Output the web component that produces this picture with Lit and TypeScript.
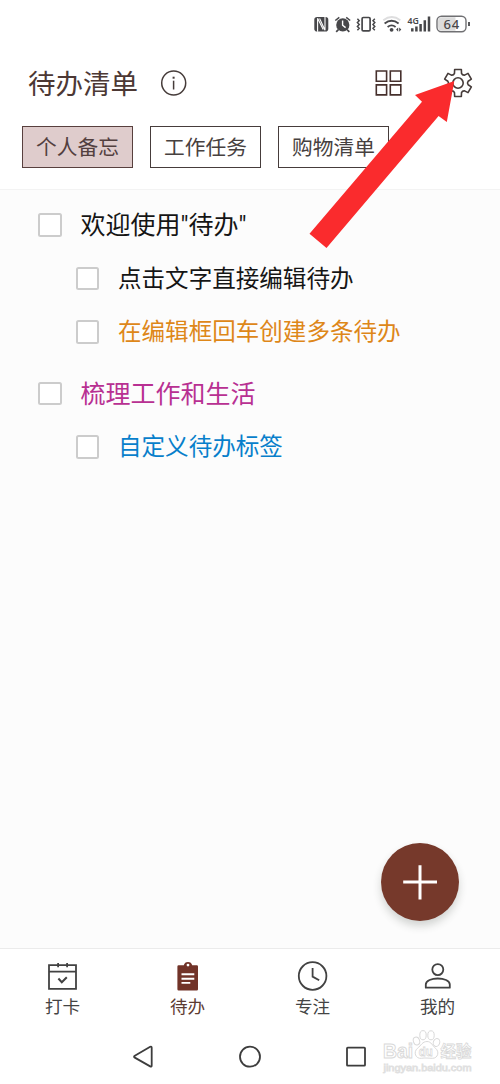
import { LitElement, html, svg, css } from "lit";
import { customElement, property, state } from "lit/decorators.js";
import { classMap } from "lit/directives/class-map.js";

const FONT = css`"Noto Sans CJK SC", "Noto Sans", sans-serif`;

function gearPath(cx: number, cy: number): string {
  const pts: string[] = [];
  for (let i = 0; i < 6; i++) {
    const base = i * 60 - 90;
    const at = (deg: number, r: number) => {
      const a = ((base + deg) * Math.PI) / 180;
      return `${(cx + r * Math.cos(a)).toFixed(2)} ${(cy + r * Math.sin(a)).toFixed(2)}`;
    };
    pts.push(`${i ? "L" : "M"}${at(-20, 10.3)}`, `L${at(-14, 13.9)}`, `L${at(14, 13.9)}`, `L${at(20, 10.3)}`);
    pts.push(`Q${at(30, 8.8)} ${at(40, 10.3)}`);
  }
  return pts.join(" ") + "Z";
}

@customElement("status-bar")
class StatusBar extends LitElement {
  static styles = css`
    :host { display: block; height: 48px; }
    svg { display: block; }
    text { font-family: "Noto Sans", sans-serif; font-weight: 500; fill: #47474a; }
  `;
  render() {
    return html`<svg width="500" height="48" viewBox="0 0 500 48" fill="none" stroke="#47474a">
      <rect x="314.3" y="17" width="14" height="14.6" rx="2.8" fill="#47474a" stroke="none"/>
      <path d="M317.6 31.8V18.2l5.6 11.2M319.6 18.4l5.4 11.8V16.8" stroke="#fff" stroke-width="1.1"/>
      <circle cx="342.8" cy="24.9" r="6.6" fill="#47474a" stroke="none"/>
      <path d="M335.3 20.5l4-3.2M350.2 20.5l-4-3.2" stroke-width="1.5"/>
      <path d="M338.5 29.5l-2.3 2.4M347 29.5l2.3 2.4" stroke-width="1.8"/>
      <path d="M342.6 20.6v4.6l3 2.4" stroke="#fff" stroke-width="1.4"/>
      <rect x="362.1" y="17.5" width="8" height="13.4" rx="1.2" stroke-width="1.7"/>
      <path d="M357.4 18.8l1.8 1.9-1.8 1.9 1.8 1.9-1.8 1.9 1.8 1.9-1.8 1.9M374.8 18.8l-1.8 1.9 1.8 1.9-1.8 1.9 1.8 1.9-1.8 1.9 1.8 1.9" stroke-width="1.5"/>
      <path d="M383.3 20.2q8.5-6.4 17 0" stroke="#dededf" stroke-width="1.9"/>
      <path d="M384.6 23.4q7-5.2 14 0M387.6 26.9q4-3 8 0" stroke-width="1.9"/>
      <circle cx="391.6" cy="29.8" r="1.9" fill="#47474a" stroke="none"/>
      <path d="M398.2 27.4l-2.1 2.2 2.1 2.2zM399.2 27.4l2.1 2.2-2.1 2.2z" fill="#47474a" stroke="none"/>
      <text x="407.5" y="23.6" font-size="9.3" stroke="none" textLength="11.3" lengthAdjust="spacingAndGlyphs" style="font-weight:600">4G</text>
      <path d="M412.3 31.6v-3.4M416.4 31.6v-5M420.6 31.6v-7.6M424.8 31.6v-11.3M429 31.6V16.6" stroke-width="2.5"/>
      <rect x="437" y="16.2" width="29" height="15.6" rx="4.5" fill="#fff" stroke-width="1.4" stroke="#707073"/>
      <path d="M442 17.2h13.5v13.6h-13.5q-4 0-4-4v-5.6q0-4 4-4z" fill="#dcdcdc" stroke="none"/>
      <path d="M469 22v4" stroke-width="1.8"/>
      <text x="443.5" y="28.8" font-size="13" stroke="none" textLength="15.6">64</text>
    </svg>`;
  }
}

@customElement("list-header")
class ListHeader extends LitElement {
  @state() private selected = 0;
  private tabs = ["个人备忘", "工作任务", "购物清单"];
  static styles = css`
    :host { display: block; box-sizing: border-box; height: 142px; padding: 14px 22px 0; background: #fff; border-bottom: 1px solid #f3f3f3; }
    .bar { display: flex; align-items: center; height: 42px; padding: 0 4px 0 6px; }
    .title { font: 400 27.5px/40px ${FONT}; color: #4c3834; margin: 0 21.5px 2px 0; white-space: nowrap; }
    .spacer { flex: 1; }
    .grid { margin-right: 39px; }
    svg { display: block; flex: none; }
    .tabs { display: flex; gap: 17px; margin-top: 22px; }
    .tab { box-sizing: border-box; width: 111px; height: 41.5px; border: 1.5px solid #463c3b; background: #fff; color: #474140; font: 400 20.7px/38px ${FONT}; text-align: center; white-space: nowrap; }
    .tab.on { background: #dfcccc; border-color: #58403e; color: #53403f; }
  `;
  render() {
    return html`
      <div class="bar">
        <h1 class="title">待办清单</h1>
        <svg width="28" height="28" viewBox="0 0 28 28" fill="none" stroke="#463c3a" stroke-width="1.5">
          <circle cx="13.7" cy="14" r="12"/><path d="M13.6 11.7v8.8"/><path d="M13.6 7.7v2" stroke-width="2"/>
        </svg>
        <div class="spacer"></div>
        <svg class="grid" width="28" height="28" viewBox="0 0 28 28" fill="none" stroke="#46302d" stroke-width="1.6">
          <path d="M1.3 2h10.3v10.3H1.3zM15.3 2h10.5v10.3H15.3zM1.3 15.9h10.3v10H1.3zM15.3 15.9h10.5v10H15.3z"/>
        </svg>
        <svg width="32" height="32" viewBox="0 0 32 32" fill="none" stroke="#463c3a" stroke-width="1.6" stroke-linejoin="round">
          <path d=${gearPath(16, 16)}/><circle cx="16" cy="16" r="5.2"/>
        </svg>
      </div>
      <div class="tabs">
        ${this.tabs.map((t, i) => html`<div class=${classMap({ tab: true, on: i === this.selected })} @click=${() => (this.selected = i)}>${t}</div>`)}
      </div>`;
  }
}

@customElement("todo-item")
class TodoItem extends LitElement {
  @property({ type: Boolean, reflect: true }) child = false;
  @property({ reflect: true }) tone = "ink";
  static styles = css`
    :host { display: flex; align-items: center; height: 53px; padding-left: 38px; color: #151515; font: 400 25px/40px Roboto, ${FONT}; white-space: nowrap; }
    :host([child]) { height: 53.5px; padding-left: 75.5px; font-size: 23.55px; }
    :host([tone="orange"]) { color: #de8719; }
    :host([tone="magenta"]) { color: #b83092; }
    :host([tone="blue"]) { color: #087fcb; }
    .box { box-sizing: border-box; flex: none; width: 23.5px; height: 23.5px; border: 2px solid #ccc; border-radius: 2.5px; background: #fff; margin-right: 19px; }
    .text { padding-top: 2px; }
    :host([child]) .text { padding-top: 1px; }
  `;
  render() {
    return html`<span class="box"></span><span class="text"><slot></slot></span>`;
  }
}

@customElement("tab-nav")
class TabNav extends LitElement {
  static styles = css`
    :host { display: grid; grid-template-columns: repeat(4, 1fr); box-sizing: border-box; height: 78px; padding-top: 11px; background: #fff; border-top: 1px solid #ebebeb; }
    .item { display: flex; flex-direction: column; align-items: center; color: #444; font: 400 17.6px/26px ${FONT}; }
    .on { color: #5d3b32; }
    svg { display: block; margin-bottom: 1px; }
  `;
  private icons = [
    svg`<path d="M2 5.2h27v23.6H2zM2 11.6h27M11.1 2.9v4.4M20.1 2.9v4.4"/><path d="M11.4 18.5l3.4 3.7 5-5" stroke-width="2"/>`,
    svg`<path d="M7.3 5.3h4.5a4.3 4.3 0 0 1 8.4 0h4.6q1.2 0 1.2 1.2v22.8q0 1.2-1.2 1.2H6.6q-1.2 0-1.2-1.2V6.5q0-1.2 1.2-1.2z" fill="#713328" stroke="none"/><circle cx="16" cy="5.1" r="1.4" fill="#fff" stroke="none"/><path d="M9.5 14.3h12.8M9.5 18.7h12.8M9.5 22.9h8.8" stroke="#fff" stroke-width="1.9"/>`,
    svg`<circle cx="15.6" cy="16" r="13.8"/><path d="M15.6 8v8.6l6.6 3.7"/>`,
    svg`<circle cx="15.8" cy="9.6" r="5.5"/><path d="M3.8 27.7v-3.2c0-8 24-8 24 0v3.2z" stroke-linejoin="round"/>`,
  ];
  render() {
    return html`${["打卡", "待办", "专注", "我的"].map(
      (label, i) => html`<div class=${classMap({ item: true, on: i === 1 })}>
        <svg width="32" height="32" viewBox="0 0 32 32" fill="none" stroke="#424242" stroke-width="1.8">${this.icons[i]}</svg>
        <span>${label}</span>
      </div>`
    )}`;
  }
}

@customElement("system-nav")
class SystemNav extends LitElement {
  static styles = css`
    :host { display: block; height: 58px; background: #fff; }
    svg { display: block; }
    .mark { font-family: "Liberation Sans", sans-serif; font-weight: 700; }
    .cjk { font-family: ${FONT}; font-weight: 700; }
    .url { font-family: "Liberation Sans", sans-serif; }
  `;
  render() {
    return html`<svg width="500" height="58" viewBox="0 1026 500 58" fill="none" stroke="#3d3d3d" stroke-width="1.8">
      <path d="M150.2 1046.8q1.5-.8 1.5 1v17.6q0 1.8-1.5 1l-15.4-8.8q-1.5-.9 0-1.9z" stroke-linejoin="round"/>
      <circle cx="250" cy="1056.7" r="10"/>
      <rect x="347" y="1047.6" width="18" height="18" rx=".7"/>
      <g stroke="#d9d9d9" stroke-width="1" fill="#fff">
        <text class="mark" x="383" y="1057.5" font-size="20.5" textLength="30" lengthAdjust="spacingAndGlyphs">Bai</text>
        <ellipse cx="416.5" cy="1041" rx="3.1" ry="4" transform="rotate(-20 416.5 1041)"/>
        <ellipse cx="423" cy="1035.2" rx="3.2" ry="4.6"/>
        <ellipse cx="431" cy="1035.3" rx="3.2" ry="4.5"/>
        <ellipse cx="436.5" cy="1042.5" rx="3.2" ry="4" transform="rotate(20 436.5 1042.5)"/>
        <path d="M427 1041.5c4.5 0 5.5 4.5 8.5 6.8 4.2 3.3 2.5 10-3 10-3 0-8-.7-11 0-6 .8-8.5-6.3-4-10 3.5-2.8 5-6.8 9.5-6.8z"/>
        <text class="mark" x="418.8" y="1056" font-size="13" textLength="14" lengthAdjust="spacingAndGlyphs" stroke-width=".8">du</text>
        <text class="cjk" x="440.5" y="1056.5" font-size="15.5" stroke-width=".8">经验</text>
      </g>
      <text class="url" x="383.5" y="1070.5" font-size="9.5" textLength="88" lengthAdjust="spacingAndGlyphs" fill="#fff" stroke="#e0e0e0" stroke-width=".8">jingyan.baidu.com</text>
    </svg>`;
  }
}

@customElement("app-root")
class AppRoot extends LitElement {
  static styles = css`
    :host { display: flex; flex-direction: column; position: relative; width: 500px; height: 1084px; overflow: hidden; background: #fff; }
    .list { flex: 1; background: #fcfcfc; padding-top: 8.5px; }
    .group { margin-bottom: 8.5px; }
    .add { position: absolute; left: 380.5px; top: 842.5px; width: 78px; height: 78px; border-radius: 50%; background: #76392b; box-shadow: 0 5px 8px rgba(40, 50, 40, 0.2); }
    .add svg, .arrow { display: block; }
    .arrow { position: absolute; left: 300px; top: 70px; pointer-events: none; }
  `;
  render() {
    return html`
      <status-bar></status-bar>
      <list-header></list-header>
      <div class="list">
        <div class="group">
          <todo-item>欢迎使用"待办"</todo-item>
          <todo-item child>点击文字直接编辑待办</todo-item>
          <todo-item child tone="orange">在编辑框回车创建多条待办</todo-item>
        </div>
        <div class="group">
          <todo-item tone="magenta">梳理工作和生活</todo-item>
          <todo-item child tone="blue">自定义待办标签</todo-item>
        </div>
      </div>
      <tab-nav></tab-nav>
      <system-nav></system-nav>
      <div class="add">
        <svg width="78" height="78" viewBox="0 0 78 78" stroke="#fff" stroke-width="3"><path d="M39 22.2v34.2M22.2 39.1H56"/></svg>
      </div>
      <svg class="arrow" width="170" height="190" viewBox="300 70 170 190">
        <path d="M454.3 81L415 95l7 6.8L309.5 233.7l17 14.3L438.6 116l8.2 6z" fill="#fa2b2d"/>
      </svg>`;
  }
}
